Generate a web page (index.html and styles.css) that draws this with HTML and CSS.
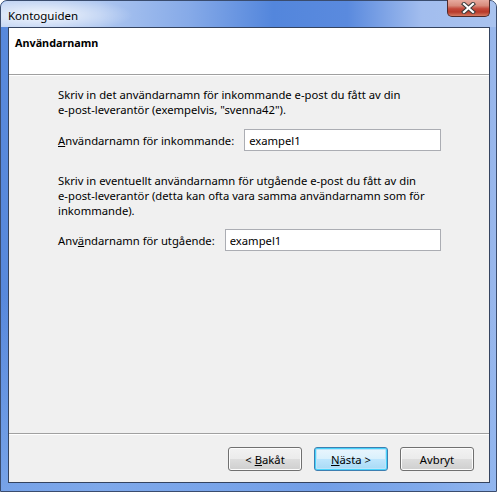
FILE: index.html
```html
<!DOCTYPE html>
<html lang="sv">
<head>
    <meta charset="UTF-8">
    <title>Kontoguiden</title>
    <link rel="stylesheet" href="styles.css">
</head>
<body>
    <div class="window">
        <div class="titlebar">
            <span class="title">Kontoguiden</span>
            <div class="close">
                <svg width="17" height="12" viewBox="0 0 17 12">
                    <path d="M4 2 L13 10 M13 2 L4 10" stroke="#3b3b3b" stroke-width="4.2" stroke-linecap="square" fill="none"/>
                    <path d="M4 2 L13 10 M13 2 L4 10" stroke="#ffffff" stroke-width="2.2" stroke-linecap="square" fill="none"/>
                </svg>
            </div>
        </div>

        <div class="client">
            <div class="header">Användarnamn</div>

            <div class="content">
                <p class="info">Skriv in det användarnamn för inkommande e-post du fått av din<br>e-post-leverantör (exempelvis, "svenna42").</p>
                <div class="field">
                    <label><u>A</u>nvändarnamn för inkommande:</label>
                    <input type="text" value="exampel1">
                </div>

                <p class="info second">Skriv in eventuellt användarnamn för utgående e-post du fått av din<br>e-post-leverantör (detta kan ofta vara samma användarnamn som för<br>inkommande).</p>
                <div class="field field-out">
                    <label>Anv<u>ä</u>ndarnamn för utgående:</label>
                    <input type="text" value="exampel1">
                </div>
            </div>

            <div class="footer">
                <button>&lt; <u>B</u>akåt</button>
                <button class="default"><u>N</u>ästa &gt;</button>
                <button>Avbryt</button>
            </div>
        </div>
    </div>
</body>
</html>
```

FILE: styles.css
```css
html, body {
    margin: 0;
    padding: 0;
    background: #ffffff;
}

body {
    font-family: "Noto Sans", "Open Sans", sans-serif;
    font-size: 11.25px;
    line-height: 15px;
    color: #000;
}

.window {
    width: 497px;
    height: 492px;
    box-sizing: border-box;
    display: flex;
    flex-direction: column;
    padding: 0 6px 8px 7px;
    border: 1px solid #3a4c6e;
    border-radius: 7px 7px 0 0;
    background:
        linear-gradient(180deg, rgba(255,255,255,0) 60%, rgba(140,180,240,0.6) 100%),
        linear-gradient(90deg, #5788dc 0%, #6b98e2 20%, #5d8ddf 45%, #4d80da 65%, #6f9be3 85%, #9ab8ec 100%);
}

.titlebar {
    height: 26px;
    display: flex;
    justify-content: space-between;
    align-items: flex-start;
    margin: 0 -6px 0 -7px;
    padding: 0 6px 0 7px;
    border-radius: 6px 6px 0 0;
    background:
        radial-gradient(ellipse 90px 18px at 42px 14px, rgba(255,255,255,0.85), rgba(255,255,255,0) 100%),
        linear-gradient(90deg, #bcd0f2 0%, #adc6f0 20%, #86aae8 38%, #5386dc 55%, #5a8ade 70%, #a2bdee 85%, #a9c3ef 100%);
}

.title {
    font-size: 11.5px;
    padding-top: 7px;
    color: #000;
}

.close {
    width: 43px;
    height: 17px;
    margin-top: -1px;
    box-sizing: border-box;
    border: 1px solid #4f2a2a;
    border-top: none;
    border-radius: 0 0 5px 5px;
    display: flex;
    align-items: center;
    justify-content: center;
    background: linear-gradient(180deg, #e7aa9f 0%, #d88b7c 35%, #c3483a 55%, #b83a2a 75%, #d57a62 100%);
}

.close svg {
    display: block;
}

.client {
    flex: 1;
    display: flex;
    flex-direction: column;
    border: 1px solid #34435f;
    background: #f0f0f0;
}

.header {
    height: 39px;
    padding: 7px 0 0 6px;
    background: #fff;
    border-bottom: 1px solid #a0a0a0;
    font-weight: bold;
    font-size: 10.8px;
}

.content {
    padding: 12px 48px 0 49px;
    box-shadow: inset 0 1px 0 #ffffff;
}

.info {
    margin: 0;
    white-space: nowrap;
}

.info.second {
    margin-top: 22px;
}

.field {
    display: flex;
    align-items: center;
    gap: 10px;
    margin-top: 12px;
}

.field-out {
    margin-top: 11px;
}

.field label {
    white-space: nowrap;
}

.field input {
    flex: 1;
    height: 22px;
    box-sizing: border-box;
    border: 1px solid #abadb3;
    padding: 0 4px;
    font-family: inherit;
    font-size: 11.25px;
    background: #fff;
    outline: none;
}

.footer {
    margin-top: auto;
    display: flex;
    justify-content: flex-end;
    gap: 12px;
    padding: 13px 15px 11px 0;
    border-top: 1px solid #a0a0a0;
    box-shadow: inset 0 1px 0 #ffffff;
}

.footer button {
    width: 74px;
    height: 24px;
    font-family: inherit;
    font-size: 11.25px;
    color: #000;
    border: 1px solid #707070;
    border-radius: 3px;
    background: linear-gradient(180deg, #f2f2f2 0%, #ebebeb 50%, #dddddd 50%, #cfcfcf 100%);
    box-shadow: inset 0 0 0 1px #fcfcfc;
    padding: 0;
}

.footer button.default {
    border-color: #3c7fb1;
    box-shadow: inset 0 0 0 1px #48d3fb, inset 0 0 0 2px #bce4f9;
    background: linear-gradient(180deg, #eaf6fd 0%, #d9f0fc 50%, #bee6fd 50%, #a7d9f5 100%);
}
```
